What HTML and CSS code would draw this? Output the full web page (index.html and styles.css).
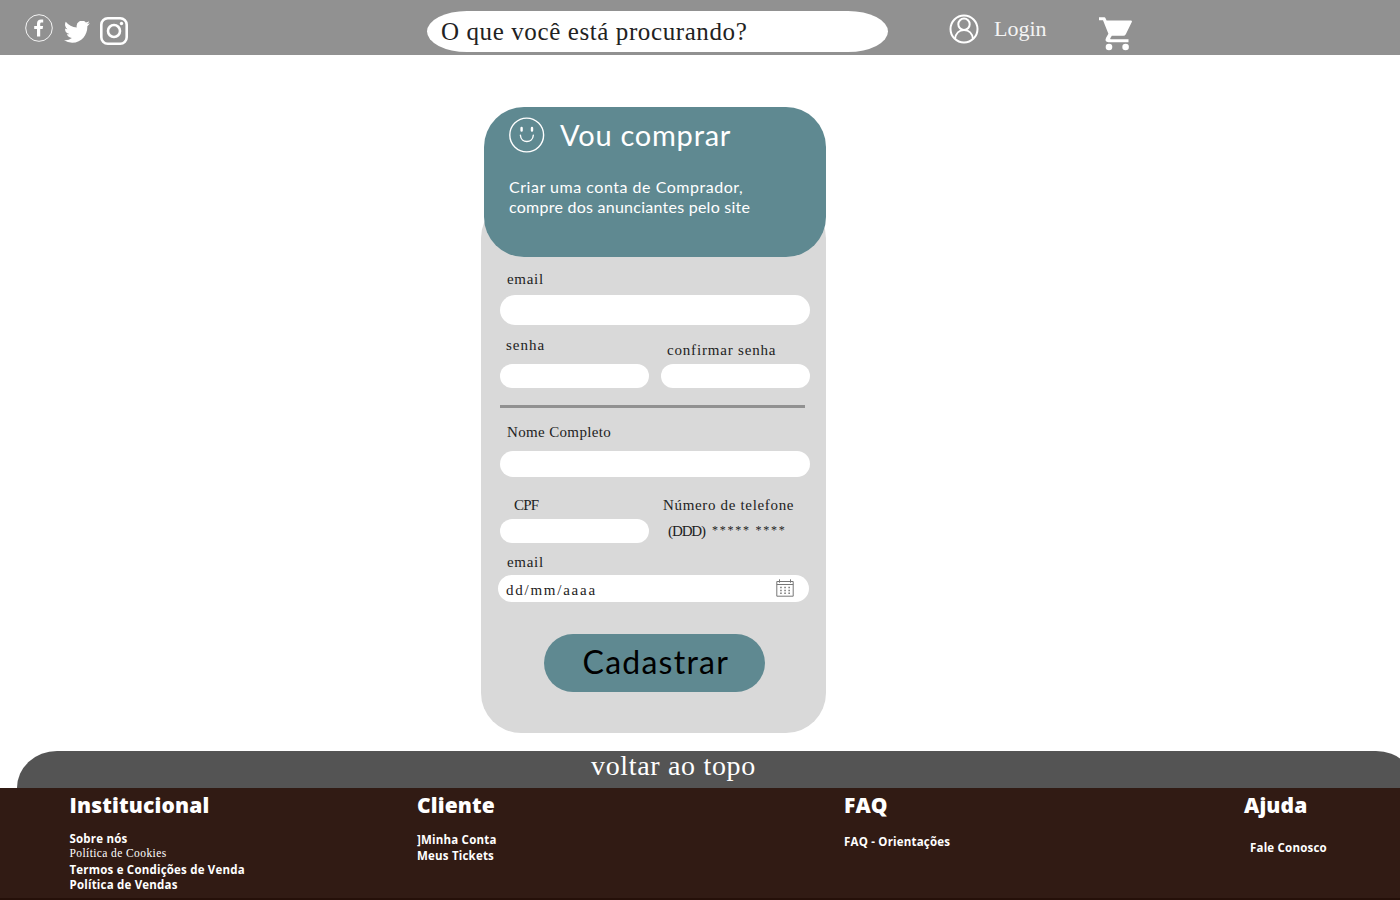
FILE: index.html
```html
<!DOCTYPE html>
<html lang="pt-BR">
<head>
<meta charset="utf-8">
<title>Cadastro de comprador</title>
<link rel="stylesheet" href="styles.css">
</head>
<body>
<header class="topbar">
  <div class="social">
    <svg class="facebook" width="28" height="28" viewBox="0 0 28 28"><circle cx="14" cy="14" r="13.3" fill="none" stroke="#fff" stroke-width=".9"/><path fill="#fff" d="M12 22.500v-7.500H9.200v-3H12V9.800c0-3 1.600-4.300 4-4.300h2.200v2.900h-1.500c-1.200 0-1.500.6-1.500 1.500V12h2.900l-.5 3h-2.400v7.500z"/></svg>
    <svg class="twitter" width="26" height="22" viewBox="0 2.500 24 19.500" preserveAspectRatio="none"><path fill="#fff" d="M23.950 4.570a10 10 0 0 1-2.820.770 4.960 4.960 0 0 0 2.160-2.720c-.95.550-2 .95-3.130 1.180a4.920 4.920 0 0 0-8.380 4.480C7.690 8.090 4.070 6.130 1.640 3.160a4.920 4.920 0 0 0 1.520 6.570 4.900 4.900 0 0 1-2.230-.61v.06a4.920 4.920 0 0 0 3.950 4.830 5 5 0 0 1-2.210.080 4.940 4.940 0 0 0 4.600 3.420A9.870 9.870 0 0 1 0 19.540a13.990 13.990 0 0 0 7.550 2.210c9.050 0 14-7.500 14-13.980 0-.21 0-.42-.02-.63a9.940 9.940 0 0 0 2.420-2.570z"/></svg>
    <svg class="instagram" width="28" height="28" viewBox="0 0 28 28" fill="none" stroke="#fff" stroke-width="2.600"><rect x="1.300" y="1.300" width="25.400" height="25.400" rx="6.500"/><circle cx="14" cy="14" r="6"/><circle cx="21.500" cy="6.500" r="1.700" fill="#fff" stroke="none"/></svg>
  </div>
  <div class="search">O que você está procurando?</div>
  <div class="account">
    <svg width="30" height="30" viewBox="0 0 30 30" fill="none" stroke="#fff" stroke-width="2"><circle cx="15" cy="15" r="13.500"/><circle cx="15" cy="10.300" r="5.700"/><path d="M6 25c.6-5.400 4.200-9 9-9s8.400 3.600 9 9"/></svg>
    <span class="login">Login</span>
  </div>
  <svg class="cart" width="34" height="34" viewBox="0 0 34 34" fill="#fff"><path d="M0 .3h5.500q.6 0 .9.600L7.600 3.400H32q1.500.1.800 1.600l-6 12.300q-.8 1.500-2.500 1.500H12.800l-1.500 2.500q-.4.9.5.9h17.700v3H9.500q-4.300-.5-2.400-4.500l2.300-4L4 3.300H0z"/><circle cx="10" cy="30" r="3.300"/><circle cx="26.600" cy="30" r="3.300"/></svg>
</header>

<main class="card">
  <section class="intro">
    <div class="intro-head">
      <svg width="36" height="36" viewBox="0 0 36 36" fill="none" stroke="#fff" stroke-width="1.400" stroke-linecap="round"><circle cx="17.700" cy="18" r="16.900"/><path d="M11.400 18.200c.6 8.400 12.300 8.400 12.900 0"/><path stroke-width="2.400" d="M12.600 10.900v2.600M23 10.900v2.600"/></svg>
      <h1 class="title">Vou comprar</h1>
    </div>
    <p class="lead"><span class="lead-a">Criar uma conta de Comprador,</span><br><span class="lead-b">compre dos anunciantes pelo site</span></p>
  </section>
  <form class="form">
    <label class="label label-email">email</label>
    <div class="field field-email"></div>
    <div class="pair pair-senha">
      <div class="half"><label class="label label-senha">senha</label><div class="field field-small"></div></div>
      <div class="half"><label class="label label-confirm">confirmar senha</label><div class="field field-small"></div></div>
    </div>
    <div class="rule"></div>
    <label class="label label-nome">Nome Completo</label>
    <div class="field field-nome"></div>
    <div class="pair pair-cpf">
      <div class="half"><label class="label label-cpf">CPF</label><div class="field field-small"></div></div>
      <div class="half"><label class="label label-tel">Número de telefone</label><div class="phone"><span class="ddd">(DDD)</span><span class="stars">***** ****</span></div></div>
    </div>
    <label class="label label-date">email</label>
    <div class="field field-date">
      <span class="date">dd/mm/aaaa</span>
      <svg width="18" height="18" viewBox="0 0 18 18" fill="none" stroke="#777" stroke-width="1"><path d="M.8 2.500h16.400v14.700H.8zM.8 5.500h16.400M3.500.3v3.400M14.500.3v3.400"/><path stroke-width="1.500" stroke-dasharray="1.500 2.600" d="M4.200 8.500h10M4.200 11.500h10M4.200 14.300h10"/></svg>
    </div>
    <div class="submit"><span>Cadastrar</span></div>
  </form>
</main>

<div class="back-top"><span>voltar ao topo</span></div>
<footer class="footer">
  <div class="col col-inst"><h2>Institucional</h2><p class="l1">Sobre nós</p><p class="l2">Política de Cookies</p><p class="l3">Termos e Condições de Venda</p><p class="l4">Política de Vendas</p></div>
  <div class="col col-cli"><h2>Cliente</h2><p>]Minha Conta</p><p>Meus Tickets</p></div>
  <div class="col col-faq"><h2>FAQ</h2><p>FAQ - Orientações</p></div>
  <div class="col col-help"><h2>Ajuda</h2><p>Fale Conosco</p></div>
</footer>
</body>
</html>
```
FILE: styles.css
```css
* { box-sizing: border-box; }
body { margin: 0; width: 1400px; height: 900px; overflow: hidden; background: #fff; font-family: "Liberation Serif", serif; color: #111; display: flex; flex-direction: column; }
svg { display: block; flex: none; }
h1, h2, p { margin: 0; font-weight: 400; }
span, label, h1, h2, p { white-space: nowrap; }

.topbar { flex: none; height: 55px; background: #919191; display: flex; align-items: flex-start; color: #fff; }
.social { display: flex; width: 427px; padding: 14px 0 0 25px; }
.twitter { margin: 7px 0 0 11px; }
.instagram { margin: 3px 0 0 10px; }
.search { width: 461px; height: 41px; margin-top: 11px; padding-left: 14px; border-radius: 40px / 20.500px; background: #fff; color: #222; font-size: 25px; line-height: 41px; letter-spacing: .6px; white-space: nowrap; }
.account { display: flex; width: 211px; padding: 14px 0 0 61px; }
.login { margin-left: 15px; font-size: 22px; line-height: 30px; letter-spacing: 0; color: #f4f4f4; }
.cart { margin-top: 17px; }

.card { flex: none; width: 345px; height: 535px; margin: 143px 0 0 481px; background: #d9d9d9; border-radius: 40px; }
.intro { width: 342px; height: 150px; margin: -91px 0 0 3px; padding: 10px 0 0 25px; border-radius: 40px; background: #5f8991; color: #fff; font-family: Lato, sans-serif; position: relative; }
.intro-head { display: flex; height: 37px; }
.title { margin-left: 15px; font-size: 29px; line-height: 35px; letter-spacing: .75px; }
.lead { margin-top: 23px; font-size: 16px; line-height: 20px; }
.lead-a { letter-spacing: .53px; }
.lead-b { letter-spacing: .25px; }

.form { padding: 12px 0 0 19px; }
.label { display: block; height: 20px; font-size: 15px; line-height: 20px; letter-spacing: .7px; color: #222; }
.field { background: #fff; border-radius: 15px; }
.label-email { padding-left: 7px; }
.field-email { width: 310px; height: 30px; margin-top: 6px; }
.pair { display: flex; gap: 12px; }
.half { width: 149px; }
.field-small { height: 24px; border-radius: 12px; }
.pair-senha { margin-top: 10px; }
.label-senha { padding-left: 6px; margin-bottom: 9px; letter-spacing: 1px; }
.label-confirm { padding-left: 6px; margin: 5px 0 4px; letter-spacing: .82px; }
.rule { width: 305px; height: 3px; margin-top: 17px; background: #919191; }
.label-nome { margin-top: 14px; padding-left: 7px; letter-spacing: .35px; }
.field-nome { width: 310px; height: 26px; margin-top: 9px; }
.pair-cpf { margin-top: 18px; }
.label-cpf { padding-left: 14px; margin-bottom: 4px; letter-spacing: -.8px; }
.label-tel { padding-left: 2px; letter-spacing: .67px; }
.phone { display: flex; margin-top: 6px; padding-left: 7px; font-size: 15px; line-height: 20px; color: #222; }
.ddd { letter-spacing: -1.100px; }
.stars { margin-left: 7px; font-size: 12px; line-height: 18px; letter-spacing: 1.750px; }
.label-date { margin-top: 9px; padding-left: 7px; }
.field-date { width: 311px; height: 27px; margin: 3px 0 0 -2px; padding: 5px 15px 0 8px; display: flex; justify-content: space-between; }
.field-date svg { margin-top: -1px; }
.date { font-size: 15px; line-height: 20px; letter-spacing: 1.750px; color: #222; }
.submit { width: 221px; height: 58px; margin: 32px 0 0 44px; padding-left: 38.500px; border-radius: 29px; background: #5f8991; color: #000; font-family: Lato, sans-serif; font-size: 32px; line-height: 55px; letter-spacing: 1.250px; }

.back-top { flex: none; width: 1399px; height: 37px; margin: 18px 0 0 17px; padding-left: 574px; border-radius: 40px 40px 0 0 / 37px 37px 0 0; background: #545454; color: #fff; font-size: 28px; line-height: 30px; letter-spacing: .67px; }
.footer { flex: none; height: 112px; display: flex; background: #311b14; border-bottom: 2px solid #251009; color: #fff; font-family: "Open Sans", sans-serif; }
.col { height: 110px; }
.col h2 { font-size: 21px; line-height: 34px; font-weight: 800; letter-spacing: .15px; }
.col p { font-size: 11.500px; line-height: 16px; font-weight: 700; letter-spacing: .2px; }
.col-inst { width: 347.500px; margin-left: 69.500px; }
.col-inst .l1 { margin-top: 9px; }
.col-inst .l2 { font-family: "Liberation Serif", serif; font-weight: 400; line-height: 13px; letter-spacing: .4px; }
.col-inst .l3 { margin-top: 2px; }
.col-inst .l4 { line-height: 14px; }
.col-cli { width: 427px; }
.col-cli h2 { margin-bottom: 10px; }
.col-faq { width: 400px; }
.col-faq h2 { margin-bottom: 12px; }
.col-help h2 { margin-bottom: 18px; }
.col-help p { padding-left: 6px; }
```
